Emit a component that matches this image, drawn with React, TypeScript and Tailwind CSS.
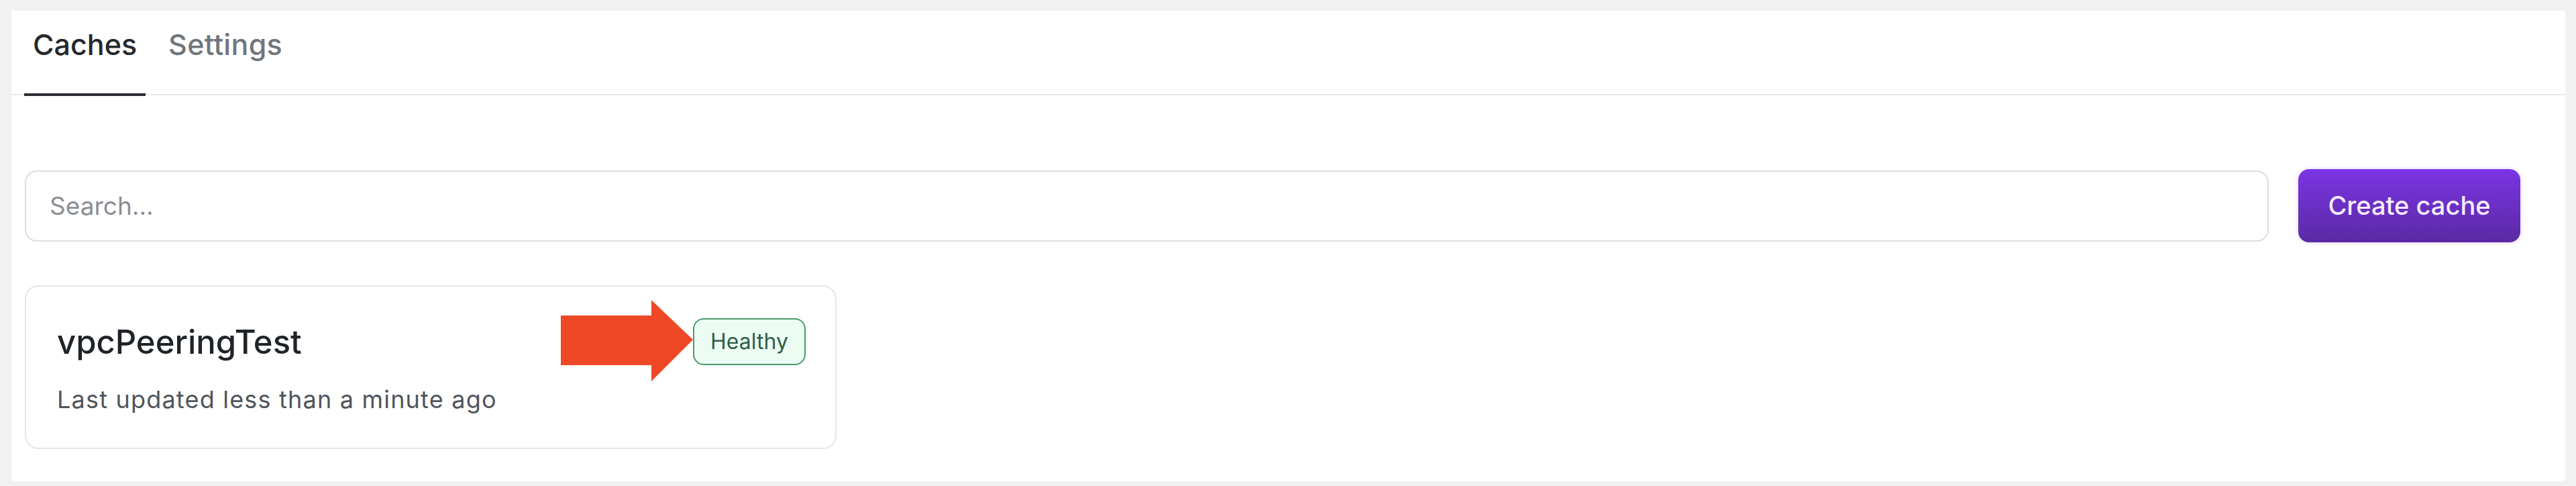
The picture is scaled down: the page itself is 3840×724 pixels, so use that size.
import React from "react";

function Arrow() {
  return (
    <svg
      className="absolute right-full top-[-27px] h-[121px] w-[197px]"
      viewBox="0 0 197 121"
      aria-hidden="true"
    >
      <polygon points="0,23 135,23 135,0 197,59 135,121 135,97 0,97" fill="#ef4826" />
    </svg>
  );
}

export default function App() {
  return (
    <div className="h-[724px] w-full bg-[#f1f1f1] pt-[16px] pl-[17px] pr-[16px] pb-[7px] font-[Inter,sans-serif]">
      <div className="flex h-full flex-col bg-white">
        {/* Tabs */}
        <div className="flex h-[126px] items-end gap-[21px] border-b-2 border-[#e8e8e8] pl-[19px]">
          <button className="-mb-[3px] border-b-4 border-[#2b2e33] px-[13px] pb-[47px] text-[43px] leading-[52px] font-medium text-[#25282d]">
            Caches
          </button>
          <button className="-mb-[3px] border-b-4 border-transparent px-[13px] pb-[47px] text-[43px] leading-[52px] font-medium tracking-[0.3px] text-[#71767d]">
            Settings
          </button>
        </div>

        {/* Search row */}
        <div className="mt-[110px] flex items-center gap-[44px] pl-[20px] pr-[67px]">
          <input
            className="h-[106px] flex-1 rounded-[18px] border-2 border-[#dedede] bg-white pl-[35px] text-[37px] text-[#25282d] outline-none placeholder:text-[#8b8e94]"
            placeholder="Search..."
          />
          <button className="h-[109px] w-[331px] rounded-[16px] bg-gradient-to-b from-[#7b34e4] to-[#5a2aa4] text-[38px] font-medium text-[#f6ecff] shadow-[0_0_6px_rgba(160,100,255,0.35)]">
            Create cache
          </button>
        </div>

        {/* Cards */}
        <div className="mt-[64px] pl-[20px]">
          <div className="flex h-[244px] w-[1210px] flex-col rounded-[20px] border-2 border-[#e6e6e6] bg-white pt-[47px] pl-[46px] pr-[44px]">
            <div className="flex h-[70px] items-center justify-between">
              <div className="text-[49px] leading-[59px] font-medium text-[#1f2328]">vpcPeeringTest</div>
              <div className="relative">
                <Arrow />
                <div className="flex h-[70px] w-[168px] items-center justify-center rounded-[16px] border-2 border-[#4a9a6e] bg-[#ecfcf3] text-[32px] text-[#2f5e46]">
                  Healthy
                </div>
              </div>
            </div>
            <div className="mt-[30px] text-[36px] leading-[43px] tracking-[1.2px] text-[#50555c]">
              Last updated less than a minute ago
            </div>
          </div>
        </div>
      </div>
    </div>
  );
}
